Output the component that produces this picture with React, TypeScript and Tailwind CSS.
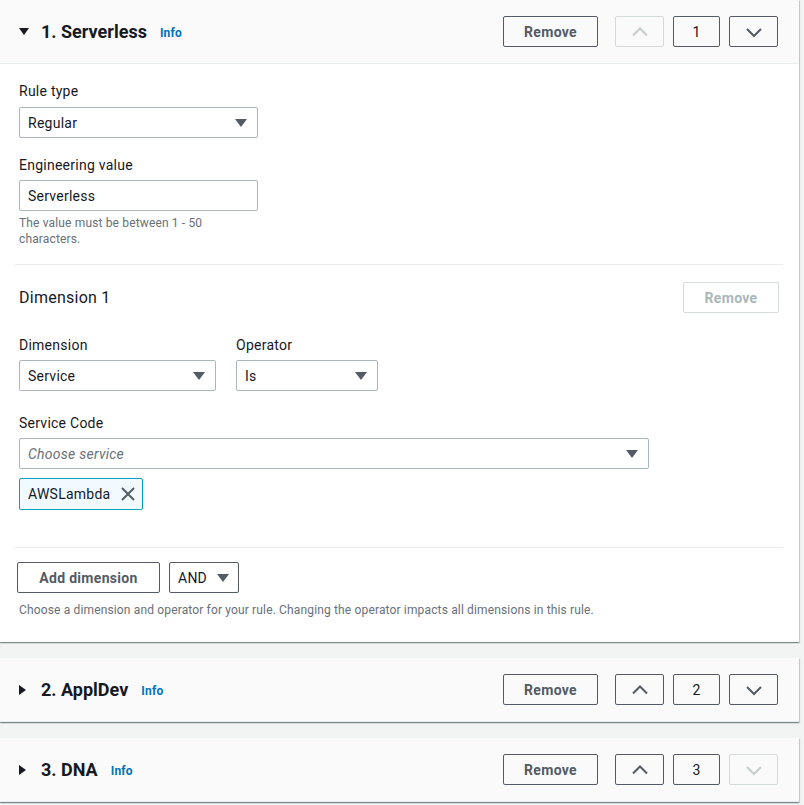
import React from "react";

const Caret = ({ dir }: { dir: "down" | "right" }) =>
  dir === "down" ? (
    <svg width="10" height="7" viewBox="0 0 10 7" className="shrink-0">
      <path d="M0 0 L10 0 L5 7 Z" fill="#16191f" />
    </svg>
  ) : (
    <svg width="7" height="10" viewBox="0 0 7 10" className="shrink-0">
      <path d="M0 0 L7 5 L0 10 Z" fill="#16191f" />
    </svg>
  );

const SelectArrow = () => (
  <svg width="12" height="8" viewBox="0 0 12 8" className="shrink-0">
    <path d="M0 0 L12 0 L6 8 Z" fill="#545b64" />
  </svg>
);

const Chevron = ({ dir, disabled }: { dir: "up" | "down"; disabled?: boolean }) => (
  <svg width="16" height="16" viewBox="0 0 16 16">
    <path
      d={dir === "up" ? "M1 11.5 L8 4.5 L15 11.5" : "M1 5 L8 12 L15 5"}
      fill="none"
      stroke={disabled ? "#c6cdcd" : "#545b64"}
      strokeWidth="2"
    />
  </svg>
);

const Btn = ({ children, w, disabled, className = "" }: { children: React.ReactNode; w: string; disabled?: boolean; className?: string }) => (
  <div
    className={`${w} h-[31px] flex items-center justify-center rounded-[2px] border text-sm font-bold tracking-[0.3px] ${
      disabled ? "border-[#d5dbdb] text-[#aab7b8]" : "border-[#545b64] text-[#545b64]"
    } ${className}`}
  >
    {children}
  </div>
);

const Header = ({ n, title, open, upDisabled, downDisabled }: { n: number; title: string; open?: boolean; upDisabled?: boolean; downDisabled?: boolean }) => (
  <div className="h-16 bg-[#fafafa] border-b border-[#eaeded] flex items-center pl-[19px] pr-[21px]">
    <div className="w-[10px] flex justify-start">
      <Caret dir={open ? "down" : "right"} />
    </div>
    <div className="ml-3 text-[18px] font-bold text-[#16191f] leading-none">
      {n}. {title}
    </div>
    <div className="ml-[13px] text-xs font-bold text-[#0073bb] mt-[2px] tracking-[0.2px]">Info</div>
    <div className="ml-auto flex items-center">
      <Btn w="w-[95px]">Remove</Btn>
      <Btn w="w-[49px]" disabled={upDisabled} className="ml-[17px]">
        <Chevron dir="up" disabled={upDisabled} />
      </Btn>
      <div className="ml-[9px] w-[47px] h-[31px] flex items-center justify-center border border-[#545b64] rounded-[2px] text-sm text-[#16191f]">
        {n}
      </div>
      <Btn w="w-[49px]" disabled={downDisabled} className="ml-[9px]">
        <Chevron dir="down" disabled={downDisabled} />
      </Btn>
    </div>
  </div>
);

const Label = ({ children, className = "" }: { children: React.ReactNode; className?: string }) => (
  <div className={`text-sm leading-[22px] text-[#16191f] tracking-[0.25px] ${className}`}>{children}</div>
);

const Select = ({ value, w, placeholder }: { value: string; w: string; placeholder?: boolean }) => (
  <div className={`${w} h-[31px] border border-[#aab7b8] rounded-[2px] bg-white flex items-center pl-2 pr-[10px] text-sm tracking-[0.25px]`}>
    <span className={placeholder ? "italic text-[#687078]" : "text-[#16191f]"}>{value}</span>
    <span className="ml-auto flex">
      <SelectArrow />
    </span>
  </div>
);

const shadow =
  "shadow-[0_1px_1px_0_rgba(0,28,36,0.3),1px_1px_1px_0_rgba(0,28,36,0.15),-1px_1px_1px_0_rgba(0,28,36,0.15)]";

export default function App() {
  return (
    <div className="min-h-[805px] w-[804px] bg-[#f2f3f3] overflow-hidden font-['Roboto',sans-serif]">
      <div className={`w-[799px] bg-white ${shadow}`}>
        <Header n={1} title="Serverless" open upDisabled />
        <div className="pl-[19px] pr-5 pt-4 pb-6">
          <Label>Rule type</Label>
          <div className="mt-[5px]">
            <Select value="Regular" w="w-[239px]" />
          </div>
          <Label className="mt-4">Engineering value</Label>
          <div className="mt-1 w-[239px] h-[31px] border border-[#aab7b8] rounded-[2px] flex items-center pl-2 text-sm text-[#16191f] tracking-[0.25px]">
            Serverless
          </div>
          <div className="mt-1 w-[215px] text-xs leading-4 text-[#687078] tracking-[0.15px]">
            The value must be between 1 - 50 characters.
          </div>
          <div className="-mx-1 mt-[17px] h-px bg-[#eaeded]" />
          <div className="mt-[17px] flex items-center h-[31px]">
            <div className="text-base text-[#16191f] tracking-[0.25px]">Dimension 1</div>
            <Btn w="w-[96px]" disabled className="ml-auto">
              Remove
            </Btn>
          </div>
          <div className="mt-[21px] flex gap-5">
            <div>
              <Label>Dimension</Label>
              <div className="mt-1">
                <Select value="Service" w="w-[197px]" />
              </div>
            </div>
            <div>
              <Label>Operator</Label>
              <div className="mt-1">
                <Select value="Is" w="w-[142px]" />
              </div>
            </div>
          </div>
          <Label className="mt-[21px]">Service Code</Label>
          <div className="mt-1">
            <Select value="Choose service" w="w-[630px]" placeholder />
          </div>
          <div className="mt-[9px] w-[124px] h-[32px] border border-[#00a1c9] bg-[#f1faff] rounded-[2px] flex items-center pl-2 text-sm text-[#16191f] tracking-[0.25px]">
            AWSLambda
            <svg width="14" height="14" viewBox="0 0 14 14" className="ml-[11px]">
              <path d="M1 1 L13 13 M13 1 L1 13" stroke="#545b64" strokeWidth="2" />
            </svg>
          </div>
          <div className="-mx-1 mt-[37px] h-px bg-[#eaeded]" />
          <div className="mt-[14px] -ml-[2px] flex items-center gap-[9px]">
            <Btn w="w-[143px]">Add dimension</Btn>
            <div className="w-[70px] h-[31px] border border-[#545b64] rounded-[2px] flex items-center pl-2 pr-[9px] text-sm text-[#16191f] tracking-[0.25px]">
              AND
              <span className="ml-auto flex">
                <SelectArrow />
              </span>
            </div>
          </div>
          <div className="mt-[9px] text-xs leading-4 text-[#687078] tracking-[0.15px]">
            Choose a dimension and operator for your rule. Changing the operator impacts all dimensions in this rule.
          </div>
        </div>
      </div>
      <div className={`mt-4 w-[799px] bg-white ${shadow}`}>
        <Header n={2} title="ApplDev" />
      </div>
      <div className={`mt-4 w-[799px] bg-white ${shadow}`}>
        <Header n={3} title="DNA" downDisabled />
      </div>
    </div>
  );
}
